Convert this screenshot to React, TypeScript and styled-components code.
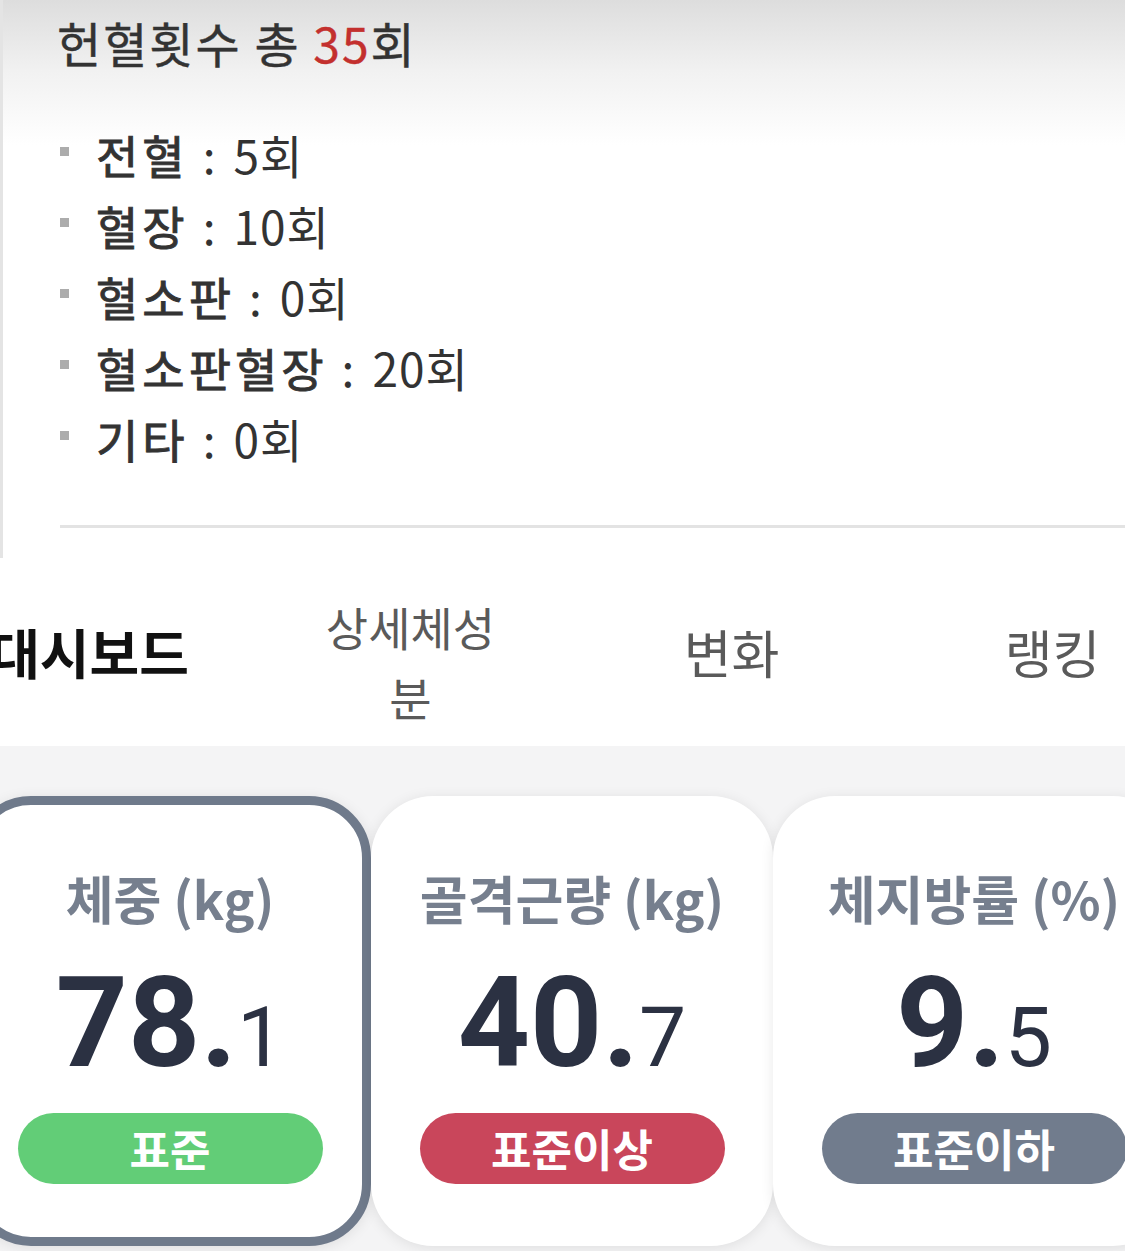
import styled, { createGlobalStyle } from "styled-components";

const GlobalStyle = createGlobalStyle`
  html, body {
    margin: 0;
    padding: 0;
    background: #ffffff;
  }
  body {
    font-family: "Noto Sans CJK KR", "Noto Sans", sans-serif;
    overflow: hidden;
  }
`;

const Page = styled.div`
  width: 1125px;
  height: 1251px;
  overflow: hidden;
  background: #ffffff;
`;

/* ---------- donation count panel ---------- */

const CountPanel = styled.section`
  box-sizing: border-box;
  height: 558px;
  padding: 14px 0 0 54px;
  border-left: 3px solid #e4e4e4;
  background: linear-gradient(to bottom, #dddddd 0px, #f1f1f1 70px, #ffffff 145px);
`;

const Title = styled.h2`
  margin: 0;
  font-size: 48px;
  line-height: 56px;
  font-weight: 400;
  letter-spacing: 2px;
  color: #333333;
  -webkit-text-stroke: 0.4px #333333;
`;

const Accent = styled.span`
  color: #c3302e;
  -webkit-text-stroke: 0.4px #c3302e;
`;

const CountList = styled.ul`
  list-style: none;
  margin: 48px 0 0;
  padding: 0;
`;

const CountItem = styled.li`
  display: flex;
  align-items: center;
  height: 71px;
  font-size: 46px;
  color: #333333;

  &::before {
    content: "";
    width: 9px;
    height: 9px;
    margin: 0 27px 4px 3px;
    background: #acacac;
  }
`;

const Label = styled.span`
  font-weight: 400;
  letter-spacing: 4px;
  -webkit-text-stroke: 0.9px #333333;
`;

const Colon = styled.span`
  margin: 0 18px 0 14px;
  font-weight: 400;
`;

const Value = styled.span`
  font-weight: 400;
  letter-spacing: 1px;
`;

const Divider = styled.hr`
  margin: 52px 0 0 3px;
  border: 0;
  height: 3px;
  background: #e3e3e3;
`;

/* ---------- tabs ---------- */

const TabBar = styled.nav`
  display: flex;
  align-items: center;
  height: 188px;
  margin-left: -71px;
`;

const Tab = styled.div<{ $active?: boolean; $size: number; $shift?: number }>`
  flex: 0 0 321px;
  margin-top: ${({ $shift }) => $shift ?? 0}px;
  text-align: center;
  font-size: ${({ $size }) => $size}px;
  line-height: 70px;
  font-weight: ${({ $active }) => ($active ? 700 : 400)};
  color: ${({ $active }) => ($active ? "#111111" : "#5a5a5a")};
`;

/* ---------- body composition cards ---------- */

const CardArea = styled.section`
  height: 505px;
  padding-top: 50px;
  box-sizing: border-box;
  background: #f4f4f5;
`;

const CardRow = styled.div`
  display: flex;
  margin-left: -31px;
`;

const Card = styled.div<{ $selected?: boolean }>`
  box-sizing: border-box;
  flex: 0 0 402px;
  height: 450px;
  padding-top: 63px;
  border: 9px solid ${({ $selected }) => ($selected ? "#6f7a8b" : "transparent")};
  border-radius: 62px;
  background: #ffffff;
  box-shadow: 0 2px 14px rgba(0, 0, 0, 0.09);
  display: flex;
  flex-direction: column;
  align-items: center;
`;

const CardTitle = styled.div`
  font-size: 52px;
  line-height: 60px;
  font-weight: 700;
  color: #767f8e;
  white-space: nowrap;
`;

const Reading = styled.div`
  height: 130px;
  margin-top: 30px;
  font-family: Roboto, "Noto Sans", sans-serif;
  line-height: 130px;
  color: #2b3142;
  white-space: nowrap;
`;

const Whole = styled.span`
  font-size: 126px;
  font-weight: 700;
`;

const Fraction = styled.span`
  font-size: 84px;
  font-weight: 400;
`;

const pillColors = {
  normal: "#62cd77",
  over: "#c9465b",
  under: "#717c8d",
};

const Pill = styled.div<{ $tone: keyof typeof pillColors }>`
  margin-top: 25px;
  width: 305px;
  height: 71px;
  border-radius: 36px;
  background: ${({ $tone }) => pillColors[$tone]};
  color: #ffffff;
  font-size: 44px;
  font-weight: 700;
  line-height: 71px;
  text-align: center;
`;

const counts = [
  { label: "전혈", value: "5회" },
  { label: "혈장", value: "10회" },
  { label: "혈소판", value: "0회" },
  { label: "혈소판혈장", value: "20회" },
  { label: "기타", value: "0회" },
];

const metrics: {
  title: string;
  whole: string;
  fraction: string;
  status: string;
  tone: keyof typeof pillColors;
  selected?: boolean;
}[] = [
  { title: "체중 (kg)", whole: "78.", fraction: "1", status: "표준", tone: "normal", selected: true },
  { title: "골격근량 (kg)", whole: "40.", fraction: "7", status: "표준이상", tone: "over" },
  { title: "체지방률 (%)", whole: "9.", fraction: "5", status: "표준이하", tone: "under" },
];

export default function App() {
  return (
    <Page>
      <GlobalStyle />
      <CountPanel>
        <Title>
          헌혈횟수 총 <Accent>35</Accent>회
        </Title>
        <CountList>
          {counts.map((c) => (
            <CountItem key={c.label}>
              <Label>{c.label}</Label>
              <Colon>:</Colon>
              <Value>{c.value}</Value>
            </CountItem>
          ))}
        </CountList>
        <Divider />
      </CountPanel>

      <TabBar>
        <Tab $active $size={54}>대시보드</Tab>
        <Tab $size={46} $shift={18}>
          상세체성
          <br />분
        </Tab>
        <Tab $size={52}>변화</Tab>
        <Tab $size={52}>랭킹</Tab>
      </TabBar>

      <CardArea>
        <CardRow>
          {metrics.map((m) => (
            <Card key={m.title} $selected={m.selected}>
              <CardTitle>{m.title}</CardTitle>
              <Reading>
                <Whole>{m.whole}</Whole>
                <Fraction>{m.fraction}</Fraction>
              </Reading>
              <Pill $tone={m.tone}>{m.status}</Pill>
            </Card>
          ))}
        </CardRow>
      </CardArea>
    </Page>
  );
}
